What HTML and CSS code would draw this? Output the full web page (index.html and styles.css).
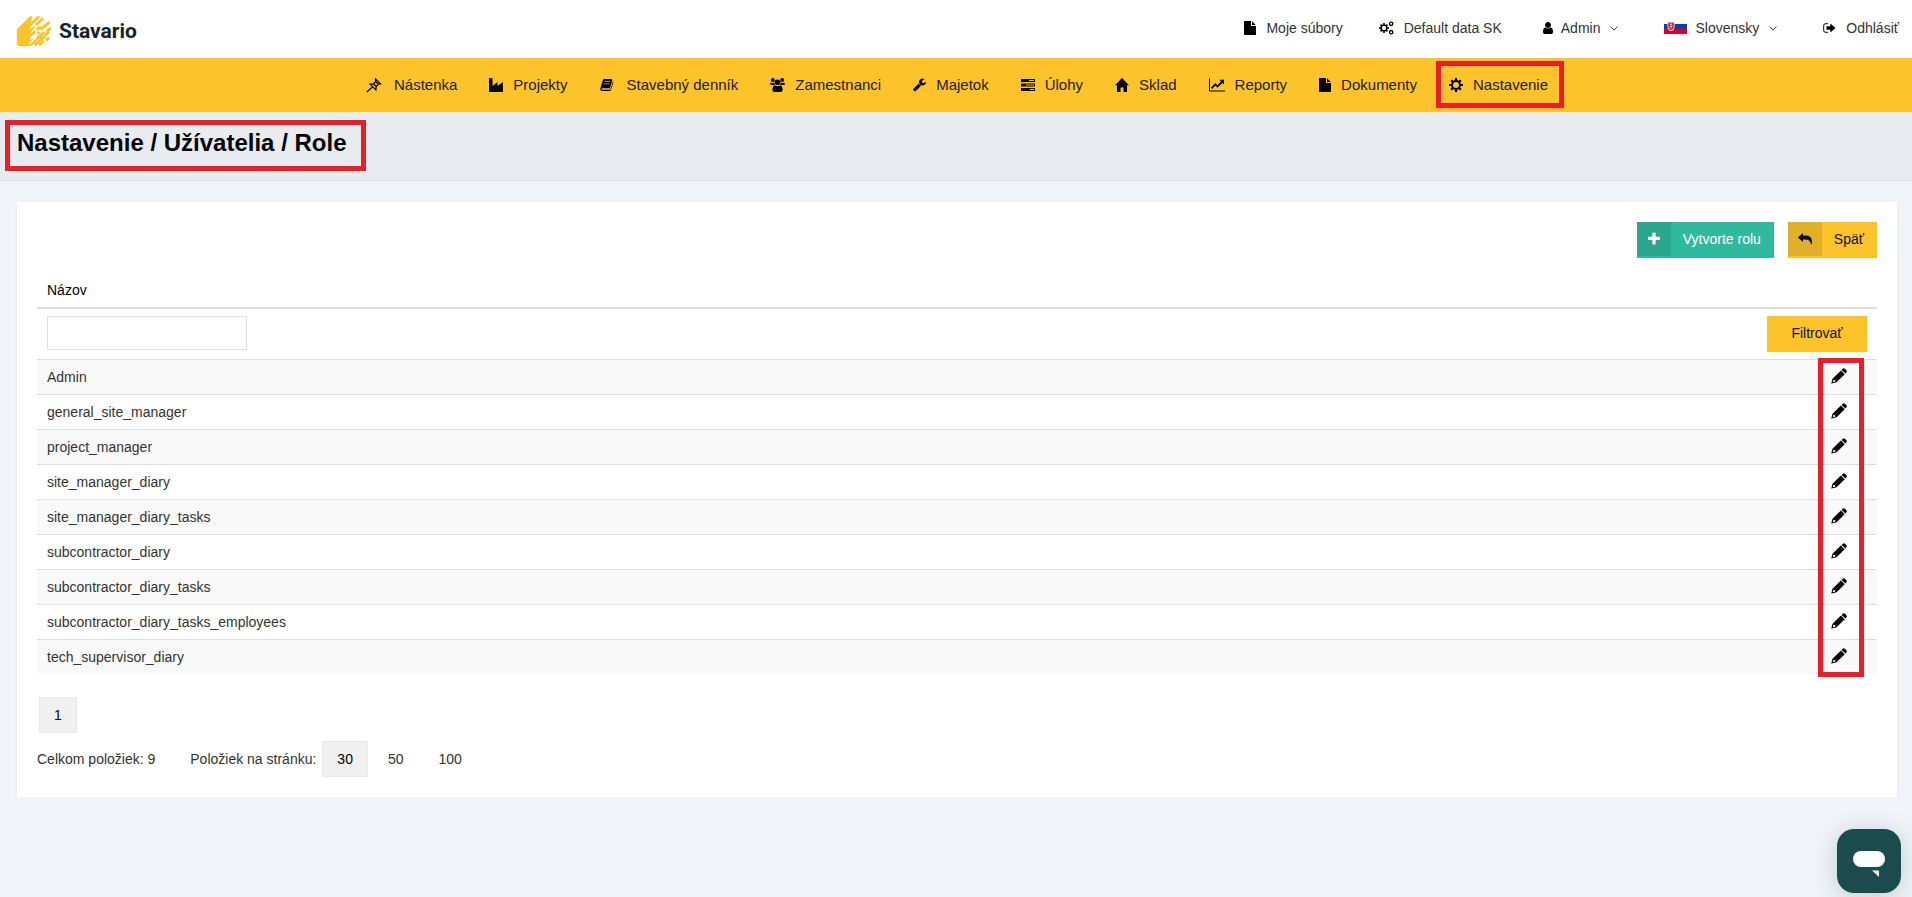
FILE: index.html
```html
<!DOCTYPE html>
<html lang="sk">
<head>
<meta charset="utf-8">
<title>Stavario – Nastavenie / Užívatelia / Role</title>
<link rel="stylesheet" href="styles.css">
</head>
<body>
<svg class="sprite" aria-hidden="true">
  <symbol id="file" viewBox="128 0 1536 1792"><path d="M1152 512v-472q22 14 36 28l408 408q14 14 28 36h-472zm-128 32q0 40 28 68t68 28h544v1056q0 40-28 68t-68 28h-1344q-40 0-68-28t-28-68v-1600q0-40 28-68t68-28h800v544z"/></symbol>
  <symbol id="cog" viewBox="0 0 14 14"><circle cx="7" cy="7" r="4" fill="none" stroke="#000" stroke-width="2"/><path d="M7 0V3M7 11V14M0 7H3M11 7H14M2.200 2.200 4 4M10 10 11.800 11.800M11.800 2.200 10 4M4 10 2.200 11.800" fill="none" stroke="#000" stroke-width="2.200"/></symbol>
  <symbol id="user" viewBox="256 128 1280 1536"><path d="M1536 1399q0 109-62.500 187t-150.500 78h-854q-88 0-150.500-78t-62.500-187q0-85 8.500-160.500t31.500-152 58.500-131 94-89 134.500-34.500q131 128 313 128t313-128q76 0 134.500 34.500t94 89 58.500 131 31.500 152 8.500 160.500zm-256-887q0 159-112.500 271.500t-271.500 112.500-271.500-112.500-112.500-271.500 112.500-271.500 271.500-112.500 271.500 112.500 112.500 271.500z"/></symbol>
  <symbol id="wrench" viewBox="64 128 1664 1664"><path d="M448 1472q0-26-19-45t-45-19-45 19-19 45 19 45 45 19 45-19 19-45zm644-420l-682 682q-37 37-90 37-52 0-91-37l-106-108q-38-36-38-90 0-53 38-91l681-681q39 98 114.500 173.500t173.500 114.500zm634-435q0 39-23 106-47 134-164.500 217.500t-258.500 83.500q-185 0-316.500-131.500t-131.500-316.500 131.500-316.500 316.500-131.500q58 0 121.500 16.500t107.500 46.500q16 11 16 28t-16 28l-293 169v224l193 107q5-3 79-48.500t135.500-81 70.500-35.500q15 0 23.500 10t8.500 25z"/></symbol>
  <symbol id="plus" viewBox="192 192 1408 1408"><path d="M1600 736v192q0 40-28 68t-68 28h-416v416q0 40-28 68t-68 28h-192q-40 0-68-28t-28-68v-416h-416q-40 0-68-28t-28-68v-192q0-40 28-68t68-28h416v-416q0-40 28-68t68-28h192q40 0 68 28t28 68v416h416q40 0 68 28t28 68z"/></symbol>
  <symbol id="pencil" viewBox="0 0 16 16"><path fill-rule="evenodd" d="M10.600 1.900 11.800.7Q13 0 13.900.7L15.400 2.200Q16.200 3.100 15.500 4.100L14.400 5.500ZM9.900 2.600 13.700 6.300 5.600 14.300.6 15.600Q.2 15.600.3 15.200L1.500 10.700ZM2.500 11.700 1.700 14.200 4.400 13.500 4.100 12.300 3.100 12Z"/></symbol>
  <symbol id="chevron" viewBox="0 0 8 5"><path d="M.5.6 4 4.100 7.500.6" fill="none" stroke="#333"/></symbol>
</svg>

<header class="topbar">
  <a class="logo" href="#">
    <svg width="36" height="32" viewBox="0 0 36 32" aria-hidden="true">
      <path fill="#fcc42a" d="M1.600 13.200 14 1.600 15.500 6 13.500 10 16 15 14 20 15 31H2.800Q.8 31 .8 29V15Q.8 14 1.600 13.200Z"/>
      <g stroke="#fcc42a" stroke-width="2.900" stroke-linecap="round" fill="none">
        <path d="M10 7.500 15 2.600M14 10.200 22.300 2.300M20.500 9.300 26.300 4.200M13.500 16 17.500 12.300M21.500 14.300 23.500 12.400M25.500 13.800 32.600 7.800M14 21 18.500 17M22.200 18 22.500 17.700M13 27 24.500 22M15 29.400 27.500 17.500M31.500 15.800 33.800 13.800M19.500 29.400 28.500 22M29 20.500 32.300 17.300M24 29.500 26.600 27M31 24.500 32.200 23.300"/>
      </g>
      <g stroke="#fff" stroke-width="1.300" stroke-linecap="round" fill="none"><path d="M13.500 28.500 20.500 22M15 13 19 9.600"/></g>
    </svg>
    <span>Stavario</span>
  </a>
  <nav class="tools" aria-label="Účet">
    <a href="#"><svg class="i12" aria-hidden="true"><use href="#file"/></svg>Moje súbory</a>
    <a href="#"><svg class="i15" viewBox="0 0 15 14" aria-hidden="true"><use href="#cog" x="0" y="2" width="10" height="10"/><circle cx="12.200" cy="2.800" r="1.700" fill="none" stroke="#000" stroke-width="1.300"/><circle cx="12.200" cy="11.200" r="1.700" fill="none" stroke="#000" stroke-width="1.300"/></svg>Default data SK</a>
    <button type="button" class="menu-user"><svg class="i10" aria-hidden="true"><use href="#user"/></svg>Admin<svg class="chev" aria-hidden="true"><use href="#chevron"/></svg></button>
    <button type="button" class="menu-lang"><svg class="flag" viewBox="0 0 23 12" aria-hidden="true"><path fill="#f4f4f4" d="M0 0h23v4H0z"/><path fill="#0b3ea8" d="M0 2h23v6H0z"/><path fill="#d80027" d="M0 7h23v5H0z"/><path fill="#fff" d="M3.500 0h7v5q0 3-3.500 4Q3.500 8 3.500 5z"/><path fill="#d8142d" d="M4.200.5h5.600V5q0 2.300-2.800 3.200Q4.200 7.300 4.200 5z"/><path fill="none" stroke="#fff" stroke-width=".6" d="M7 1v6M5.800 2.500h2.400M5.300 4.500h3.400"/></svg>Slovensky<svg class="chev" aria-hidden="true"><use href="#chevron"/></svg></button>
    <a href="#" class="logout"><svg class="i13" viewBox="0 0 13 10" aria-hidden="true"><path d="M5 .7H2.500Q.7.700.7 2.500V7.500Q.7 9.300 2.500 9.300H5" fill="none" stroke="#000"/><path d="M3.500 3.200H7.300V.5L12.600 5 7.300 9.500V6.800H3.500z"/></svg>Odhlásiť</a>
  </nav>
</header>

<nav class="mainnav" aria-label="Hlavné menu">
  <a href="#"><svg class="i18" viewBox="0 0 18 15" aria-hidden="true"><path d="M9.500.8 14.500 5.800 12.500 6.200 10.200 8.500 9.900 12 4 6.100 7.500 5.800 9.600 3.500zM6.700 8.800.8 14M7.500 5.800 10.200 8.500M9.600 3.500 12.500 6.200" fill="none" stroke="#000" stroke-width="1.200"/></svg>Nástenka</a>
  <a href="#"><svg class="i14" viewBox="0 0 14 14" aria-hidden="true"><path d="M0 0h3.500v8L8.500 4v4L14 4v10H0z"/></svg>Projekty</a>
  <a href="#"><svg class="i17" viewBox="0 0 17 14" aria-hidden="true"><path fill-rule="evenodd" d="M4.200 1H11.300Q12.800 1 12.300 2.500L9.900 10.300H2Q1.200 10.700 1.700 11.700H10.300L12.900 3.500Q13.500 3.800 13.200 5L11 11.800Q10.600 13 9.400 13H1.900Q.2 12.700.2 11L2.700 2.500Q3 1 4.200 1ZM5 3.200 4.800 4H10L10.300 3.200ZM4.300 5.500 4 6.300H9.300L9.600 5.500Z"/></svg>Stavebný denník</a>
  <a href="#"><svg class="i15" viewBox="0 0 15 14" aria-hidden="true"><circle cx="2.800" cy="2" r="2"/><circle cx="12.200" cy="2" r="2"/><circle cx="7.500" cy="4.300" r="2.800"/><path d="M.8 4.500Q2.500 5.500 4.200 4.500 4.300 6 5 7H2Q0 7 0 6ZM14.200 4.500Q12.500 5.500 10.800 4.500 10.700 6 10 7H13Q15 7 15 6ZM4.700 7.300Q7.500 9.300 10.300 7.300 12.600 8 12.600 12 12.600 14 10.600 14H4.400Q2.400 14 2.400 12 2.400 8 4.700 7.300Z"/></svg>Zamestnanci</a>
  <a href="#"><svg class="i13" aria-hidden="true"><use href="#wrench"/></svg>Majetok</a>
  <a href="#"><svg class="i14" viewBox="0 0 14 12" aria-hidden="true"><path fill-rule="evenodd" d="M0 0H14V3H0ZM8 1V2H13V1ZM0 4.500H14V7.500H0ZM5 5.500V6.500H13V5.500ZM0 9H14V12H0ZM9 10V11H13V10Z"/></svg>Úlohy</a>
  <a href="#"><svg class="i14" viewBox="0 0 14 14" aria-hidden="true"><path d="M7 0 14 7.300H12V14H8.500V9.500H5.500V14H2V7.300H0Z"/></svg>Sklad</a>
  <a href="#"><svg class="i16" viewBox="0 0 16 13" aria-hidden="true"><path d="M.5 0V12.500H16" fill="none" stroke="#000"/><path d="M2.500 9.800 6.300 5.800 8.500 8 13 3.500" fill="none" stroke="#000" stroke-width="1.800"/><path d="M10.300 1.300H15V6z"/></svg>Reporty</a>
  <a href="#"><svg class="i12" aria-hidden="true"><use href="#file"/></svg>Dokumenty</a>
  <a href="#" class="marked"><svg class="i14" aria-hidden="true"><use href="#cog"/></svg>Nastavenie</a>
</nav>

<div class="titlebar"><h1>Nastavenie / Užívatelia / Role</h1></div>

<main class="card">
  <div class="actions">
    <button type="button" class="btn green"><span class="btn-icon"><svg class="i12" aria-hidden="true"><use href="#plus"/></svg></span><span class="btn-text">Vytvorte rolu</span></button>
    <button type="button" class="btn"><span class="btn-icon"><svg class="i14" viewBox="0 0 14 12" aria-hidden="true"><path d="M0 4.500 5 0V2.600H7.500Q13.900 2.600 13.900 8.500 13.900 10.500 13 12 12.800 6.500 7.500 6.500H5V9Z"/></svg></span><span class="btn-text">Späť</span></button>
  </div>
  <div class="grid">
    <table>
      <thead>
        <tr><th scope="col">Názov</th><th></th></tr>
        <tr class="filter"><td><input type="text" aria-label="Názov"></td><td><button type="button" class="btn apply">Filtrovať</button></td></tr>
      </thead>
      <tbody>
        <tr><td>Admin</td><td><a href="#" aria-label="Upraviť"><svg class="i16" aria-hidden="true"><use href="#pencil"/></svg></a></td></tr>
        <tr><td>general_site_manager</td><td><a href="#" aria-label="Upraviť"><svg class="i16" aria-hidden="true"><use href="#pencil"/></svg></a></td></tr>
        <tr><td>project_manager</td><td><a href="#" aria-label="Upraviť"><svg class="i16" aria-hidden="true"><use href="#pencil"/></svg></a></td></tr>
        <tr><td>site_manager_diary</td><td><a href="#" aria-label="Upraviť"><svg class="i16" aria-hidden="true"><use href="#pencil"/></svg></a></td></tr>
        <tr><td>site_manager_diary_tasks</td><td><a href="#" aria-label="Upraviť"><svg class="i16" aria-hidden="true"><use href="#pencil"/></svg></a></td></tr>
        <tr><td>subcontractor_diary</td><td><a href="#" aria-label="Upraviť"><svg class="i16" aria-hidden="true"><use href="#pencil"/></svg></a></td></tr>
        <tr><td>subcontractor_diary_tasks</td><td><a href="#" aria-label="Upraviť"><svg class="i16" aria-hidden="true"><use href="#pencil"/></svg></a></td></tr>
        <tr><td>subcontractor_diary_tasks_employees</td><td><a href="#" aria-label="Upraviť"><svg class="i16" aria-hidden="true"><use href="#pencil"/></svg></a></td></tr>
        <tr><td>tech_supervisor_diary</td><td><a href="#" aria-label="Upraviť"><svg class="i16" aria-hidden="true"><use href="#pencil"/></svg></a></td></tr>
      </tbody>
    </table>
    <div class="edit-frame"></div>
  </div>
  <div class="pages"><a href="#" class="page current">1</a></div>
  <div class="summary">
    <span class="total">Celkom položiek: 9</span>
    <span>Položiek na stránku:</span>
    <div class="sizes"><a href="#" class="page current">30</a><a href="#" class="page">50</a><a href="#" class="page">100</a></div>
  </div>
</main>

<button type="button" class="chat" aria-label="Chat"><svg width="32" height="26" viewBox="0 0 32 26" aria-hidden="true"><rect width="32" height="16" rx="8" fill="#fff"/><path d="M19 19.500H26V26Z" fill="#fff"/></svg></button>
</body>
</html>
```
FILE: styles.css
```css
* { box-sizing: border-box; }
body {
  margin: 0;
  background: #f0f3f8;
  color: #333;
  font: 14px/20px "Liberation Sans", Arial, sans-serif;
}
a { color: inherit; text-decoration: none; }
button { font: inherit; color: inherit; border: 0; background: none; padding: 0; cursor: pointer; }
svg { display: block; flex: none; }
.sprite { position: absolute; width: 0; height: 0; }

.i10 { width: 10px; height: 12px; }
.i12 { width: 12px; height: 14px; }
.i13 { width: 13px; height: 14px; }
.i14 { width: 14px; height: 14px; }
.i15 { width: 15px; height: 14px; }
.i16 { width: 16px; height: 16px; }
.i17 { width: 17px; height: 14px; }
.i18 { width: 18px; height: 15px; }

.topbar {
  display: flex;
  align-items: center;
  justify-content: space-between;
  height: 58px;
  padding: 0 13px 0 16px;
  background: #fff;
}
.logo {
  display: flex;
  align-items: center;
  gap: 7px;
  padding-top: 3px;
  color: #17222b;
  font: bold 21px/32px Roboto, sans-serif;
}
.tools { display: flex; gap: 36px; padding-bottom: 2px; }
.tools > * { display: flex; align-items: center; gap: 10px; height: 20px; }
.tools .menu-user { gap: 8px; padding: 0 10px 0 5px; }
.tools .menu-lang { gap: 8px; padding-right: 10px; }
.flag { width: 23px; height: 12px; }
.chev { width: 8px; height: 5px; margin-left: 2px; }

.mainnav {
  display: flex;
  justify-content: center;
  align-items: center;
  gap: 32px;
  height: 54px;
  padding-left: 2px;
  background: #fcc42a;
  color: #222;
  font-size: 15px;
}
.mainnav a { display: flex; align-items: center; gap: 10px; }
.marked { position: relative; }
.marked::after {
  content: "";
  position: absolute;
  inset: -14px -16px -13px -13px;
  border: 5px solid #ee1c25;
}

.titlebar {
  padding: 8px 5px 9px;
  background: #e8ebf0;
  border-bottom: 1px solid #dcdfe4;
}
h1 {
  width: fit-content;
  margin: 0;
  padding: 7px 15px 12px 7px;
  border: 5px solid #ee1c25;
  color: #000;
  font-size: 24px;
  line-height: 22px;
}

.card {
  margin: 21px 15px 0 17px;
  padding: 20px;
  background: #fff;
  box-shadow: 0 2px 4px rgba(0, 0, 0, .04);
}
.actions { display: flex; justify-content: flex-end; gap: 14px; }
.btn {
  display: flex;
  align-items: flex-start;
  height: 36px;
  background: #fcc42a;
  color: #111;
  line-height: 34px;
}
.btn-icon {
  display: grid;
  place-items: center;
  width: 34px;
  height: 34px;
  background: #e2b027;
}
.btn-text { padding: 0 13px 0 12px; }
.green { background: #30b99f; color: #fff; fill: #fff; }
.green .btn-icon { background: #2ba68f; }

.grid { position: relative; margin-top: 14px; }
table { width: 100%; border-collapse: collapse; }
th, td { padding: 7px 10px; text-align: left; font-weight: normal; border-top: 1px solid #ddd; }
th { border-top: 0; border-bottom: 2px solid #ddd; padding: 8px 10px 7px; color: #000; }
.filter td { border-top: 0; vertical-align: top; }
.filter input {
  display: block;
  width: 200px;
  height: 34px;
  border: 1px solid #dde0e2;
  padding: 6px 10px;
  font: inherit;
}
.apply { justify-content: center; width: 100px; margin-left: auto; }
tbody tr:nth-child(odd) { background: #f9f9f9; }
tbody td:last-child { padding: 0 30px 2px 0; }
tbody td a { display: block; width: 16px; margin-left: auto; }
.edit-frame {
  position: absolute;
  right: 13px;
  bottom: -3px;
  width: 46px;
  height: 319px;
  border: 5px solid #ee1c25;
  pointer-events: none;
}

.pages { display: flex; margin-top: 23px; padding-left: 2px; }
.page { padding: 7px 14px; border: 1px solid transparent; line-height: 20px; }
.current { background: #f0f0f0; border-color: #e8e8e8; color: #000; }
.summary { display: flex; align-items: center; margin-top: 8px; }
.total { margin-right: 35px; }
.sizes { display: flex; gap: 5px; margin-left: 6px; }

.chat {
  position: fixed;
  right: 11px;
  bottom: 4px;
  display: grid;
  place-items: center;
  width: 64px;
  height: 64px;
  padding-top: 6px;
  border-radius: 17px;
  background: #1b4b4f;
  box-shadow: 0 4px 24px rgba(27, 75, 79, .22);
}
```
